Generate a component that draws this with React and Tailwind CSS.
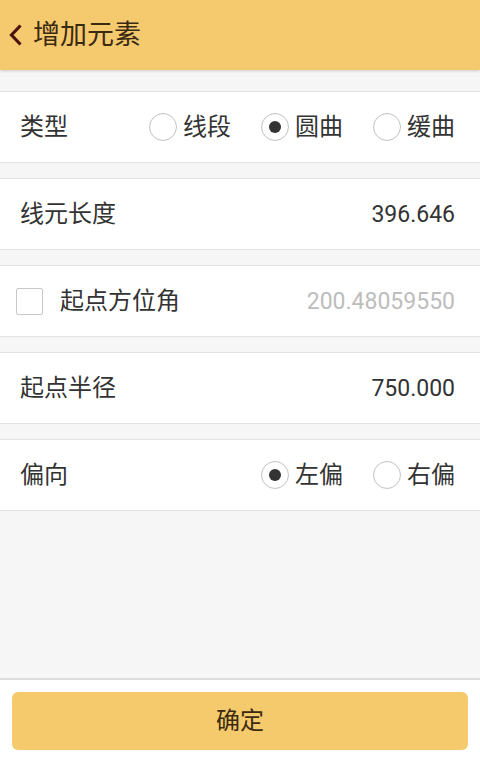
import React from "react";

const font = { fontFamily: '"Roboto", "Noto Sans CJK SC", sans-serif' };

function Radio({ checked, label }) {
  return (
    <div className="flex items-center">
      <div className="w-[28px] h-[28px] rounded-full border border-[#c4c4c4] bg-white flex items-center justify-center shadow-[inset_0_0_1px_rgba(0,0,0,0.08)]">
        {checked && <div className="w-[12px] h-[12px] rounded-full bg-[#333333]" />}
      </div>
      <span className="ml-[6px] text-[24px] leading-none text-[#333333]">{label}</span>
    </div>
  );
}

function Row({ children }) {
  return (
    <div className="h-[72px] bg-white border-y border-[#e2e2e2] flex items-center pl-[20px] pr-[25px]">
      {children}
    </div>
  );
}

export default function App() {
  return (
    <div className="w-[480px] h-[762px] bg-[#f6f6f6] flex flex-col" style={font}>
      <div className="h-[70px] bg-[#f5c96d] flex items-center shadow-[0_1px_3px_rgba(0,0,0,0.18)] relative z-10">
        <svg width="15" height="24" viewBox="0 0 15 24" className="ml-[8px]">
          <path d="M12.5 2.5 L3.5 12 L12.5 21.5" fill="none" stroke="#4a1410" strokeWidth="3.2" strokeLinecap="butt" strokeLinejoin="miter" />
        </svg>
        <span className="ml-[10px] text-[27px] leading-none text-[#3b2a12]">增加元素</span>
      </div>

      <div className="flex flex-col gap-[15px] pt-[21px]">
        <Row>
          <span className="text-[24px] leading-none text-[#333333]">类型</span>
          <div className="ml-auto flex items-center gap-[30px]">
            <Radio label="线段" />
            <Radio checked label="圆曲" />
            <Radio label="缓曲" />
          </div>
        </Row>
        <Row>
          <span className="text-[24px] leading-none text-[#333333]">线元长度</span>
          <span className="ml-auto text-[23px] leading-none text-[#333333]">396.646</span>
        </Row>
        <div className="h-[72px] bg-white border-y border-[#e2e2e2] flex items-center pl-[16px] pr-[25px]">
          <div className="w-[27px] h-[27px] rounded-[2px] border border-[#c8c8c8] bg-white" />
          <span className="ml-[17px] text-[24px] leading-none text-[#333333]">起点方位角</span>
          <span className="ml-auto text-[23px] leading-none text-[#bdbdbd]">200.48059550</span>
        </div>
        <Row>
          <span className="text-[24px] leading-none text-[#333333]">起点半径</span>
          <span className="ml-auto text-[23px] leading-none text-[#333333]">750.000</span>
        </Row>
        <Row>
          <span className="text-[24px] leading-none text-[#333333]">偏向</span>
          <div className="ml-auto flex items-center gap-[30px]">
            <Radio checked label="左偏" />
            <Radio label="右偏" />
          </div>
        </Row>
      </div>

      <div className="flex-1" />

      <div className="h-[84px] bg-white border-t-2 border-[#dcdcdc] px-[12px] pt-[12px]">
        <button className="w-full h-[58px] rounded-[6px] bg-[#f4ca6c] flex items-center justify-center text-[24px] text-[#3b2a12]" style={font}>
          确定
        </button>
      </div>
    </div>
  );
}
